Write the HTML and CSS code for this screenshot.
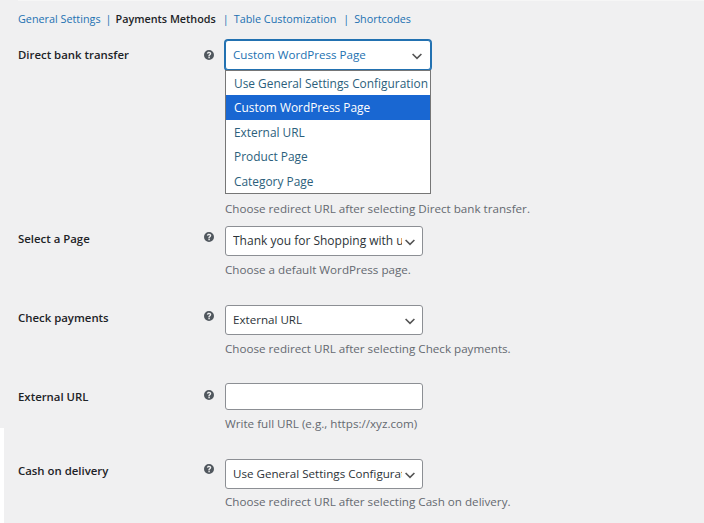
FILE: index.html
```html
<!DOCTYPE html>
<html lang="en">
<head>
    <meta charset="UTF-8">
    <meta name="viewport" content="width=device-width, initial-scale=1.0">
    <title>Payments Methods</title>
    <link rel="stylesheet" href="styles.css">
</head>
<body>
    <div class="settings__page">
        <nav class="settings__tabs">
            <a href="#">General Settings</a>
            <span class="tab__sep">|</span>
            <strong>Payments Methods</strong>
            <span class="tab__sep tab__sep--wide">|</span>
            <a href="#">Table Customization</a>
            <span class="tab__sep tab__sep--wide">|</span>
            <a href="#">Shortcodes</a>
        </nav>

        <div class="form__row form__row--bank">
            <label class="form__label">Direct bank transfer</label>
            <svg class="help__icon" viewBox="0 0 20 20"><use href="#help"></use></svg>
            <div class="form__field">
                <div class="select__wrap">
                    <select class="form__select form__select--focus">
                        <option>Custom WordPress Page</option>
                    </select>
                    <ul class="select__menu">
                        <li>Use General Settings Configuration</li>
                        <li class="is__active">Custom WordPress Page</li>
                        <li>External URL</li>
                        <li>Product Page</li>
                        <li>Category Page</li>
                    </ul>
                </div>
                <p class="form__desc">Choose redirect URL after selecting Direct bank transfer.</p>
            </div>
        </div>

        <div class="form__row form__row--page">
            <label class="form__label">Select a Page</label>
            <svg class="help__icon" viewBox="0 0 20 20"><use href="#help"></use></svg>
            <div class="form__field">
                <select class="form__select">
                    <option>Thank you for Shopping with us</option>
                </select>
                <p class="form__desc">Choose a default WordPress page.</p>
            </div>
        </div>

        <div class="form__row form__row--check">
            <label class="form__label">Check payments</label>
            <svg class="help__icon" viewBox="0 0 20 20"><use href="#help"></use></svg>
            <div class="form__field">
                <select class="form__select">
                    <option>External URL</option>
                </select>
                <p class="form__desc">Choose redirect URL after selecting Check payments.</p>
            </div>
        </div>

        <div class="form__row form__row--url">
            <label class="form__label">External URL</label>
            <svg class="help__icon" viewBox="0 0 20 20"><use href="#help"></use></svg>
            <div class="form__field">
                <input type="text" class="form__input">
                <p class="form__desc">Write full URL (e.g., https://xyz.com)</p>
            </div>
        </div>

        <div class="form__row form__row--cash">
            <label class="form__label">Cash on delivery</label>
            <svg class="help__icon" viewBox="0 0 20 20"><use href="#help"></use></svg>
            <div class="form__field">
                <select class="form__select">
                    <option>Use General Settings Configuration</option>
                </select>
                <p class="form__desc">Choose redirect URL after selecting Cash on delivery.</p>
            </div>
        </div>
    </div>

    <div class="page__gutter"></div>

    <svg class="icon__defs" width="0" height="0">
        <symbol id="help" viewBox="0 0 20 20">
            <path fill-rule="evenodd" d="M10 0a10 10 0 1 1 0 20a10 10 0 0 1 0-20zM10.2 3.6c-2.5 0-4.2 1.3-4.5 3.6l2.7.4c.2-1.1.8-1.7 1.7-1.7c.9 0 1.5.5 1.5 1.3c0 .7-.4 1.1-1.2 1.7c-1.1.8-1.7 1.5-1.7 2.8v.8h2.6v-.5c0-.7.3-1.1 1.2-1.7c1.2-.9 2-1.8 2-3.3c0-2-1.7-3.4-4.3-3.4zM8.8 13.6v2.7h2.8v-2.7z"/>
        </symbol>
    </svg>
</body>
</html>
```

FILE: styles.css
```css
* {
    box-sizing: border-box;
}
body {
    margin: 0;
    height: 523px;
    overflow: hidden;
    background: #f0f0f1;
    color: #3c434a;
    font-family: 'Open Sans', sans-serif;
    font-size: 11.65px;
}
.settings__page {
    margin-left: 18px;
    padding-top: 11px;
    border-top: 1px solid #f6f6f6;
}
.settings__tabs {
    display: flex;
    align-items: center;
    height: 14px;
    line-height: 14px;
    font-size: 10.8px;
}
.settings__tabs a {
    color: #2271b1;
    text-decoration: none;
}
.settings__tabs strong {
    color: #1d2327;
    font-weight: 600;
}
.tab__sep {
    color: #2271b1;
    margin: 0 4px 0 5px;
}
.tab__sep--wide {
    margin: 0 5px 0 7px;
}
.form__row {
    display: flex;
    align-items: flex-start;
    margin-top: 26px;
}
.form__row--bank {
    margin-top: 14px;
}
.form__row--page {
    margin-top: 9px;
}
.form__row--check,
.form__row--url {
    margin-top: 27px;
}
.form__label {
    width: 186px;
    margin-top: 6px;
    color: #1d2327;
    font-size: 11.4px;
    font-weight: 600;
    line-height: 14px;
}
.help__icon {
    width: 10px;
    height: 10px;
    margin-top: 6px;
    fill: #50575e;
    flex-shrink: 0;
}
.form__row--bank .form__label {
    margin-top: 8px;
}
.form__row--bank .help__icon {
    margin-top: 10px;
}
.form__field {
    margin-left: 11px;
}
.form__row--url .form__field {
    margin-top: -1px;
}
.form__row--cash .form__field {
    margin-top: 1px;
}
.select__wrap {
    position: relative;
    width: 206px;
    height: 155px;
}
.form__select {
    display: block;
    width: 198px;
    height: 30px;
    padding: 0 20px 2px 7px;
    border: 1px solid #8c8f94;
    border-radius: 3px;
    background: #fff url("data:image/svg+xml,%3Csvg xmlns='http://www.w3.org/2000/svg' width='20' height='20'%3E%3Cpath d='M4.5 7.5l5.5 5.5 5.5-5.5' fill='none' stroke='%23555' stroke-width='2'/%3E%3C/svg%3E") no-repeat right 4px top 55% / 16px 16px;
    color: #2c3338;
    font-family: inherit;
    font-size: 11.6px;
    appearance: none;
}
.form__row--page .form__select {
    font-size: 12px;
}
.form__select--focus {
    width: 206px;
    border-color: #2271b1;
    box-shadow: 0 0 0 1px #2271b1;
    color: #2271b1;
    background-position: right 5px top 55%;
}
.select__menu {
    position: absolute;
    top: 30px;
    left: 0;
    width: 206px;
    margin: 0;
    padding: 0;
    list-style: none;
    background: #fff;
    border: 1px solid #767676;
    color: #2c5f7c;
    font-size: 11.9px;
}
.select__menu li {
    height: 24.4px;
    line-height: 24px;
    padding-left: 8px;
    white-space: nowrap;
    overflow: hidden;
}
.select__menu li.is__active {
    background: #1967d2;
    color: #fff;
}
.form__desc {
    margin: 6px 0 0;
    color: #646970;
    line-height: 16px;
}
.form__row--cash .form__desc {
    margin-top: 5px;
}
.form__input {
    display: block;
    width: 198px;
    height: 27px;
    border: 1px solid #8c8f94;
    border-radius: 3px;
    background: #fff;
}
.page__gutter {
    position: absolute;
    left: 0;
    top: 428px;
    width: 4px;
    height: 95px;
    background: #fff;
}
.icon__defs {
    position: absolute;
}
```
